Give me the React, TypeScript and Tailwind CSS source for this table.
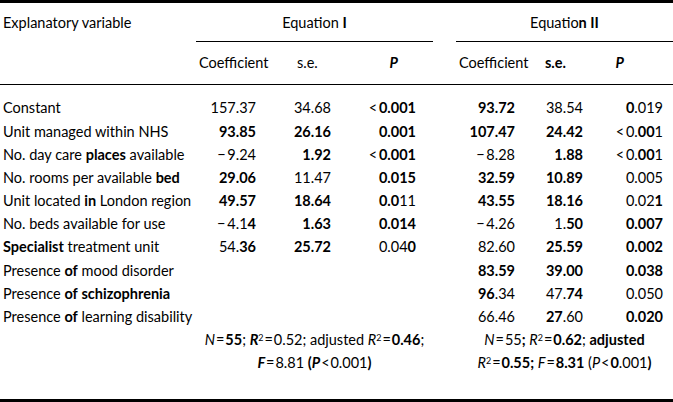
import React from "react";

type Seg = string | { b?: boolean; i?: boolean; sup?: boolean; t: string };

function R({ segs }: { segs: Seg[] }) {
  return (
    <span>
      {segs.map((s, k) => {
        if (typeof s === "string") return <React.Fragment key={k}>{s}</React.Fragment>;
        const cls = [s.b ? "font-bold" : "", s.i ? "italic" : ""].join(" ");
        if (s.sup)
          return (
            <sup key={k} className={"text-[9px] " + cls}>
              {s.t}
            </sup>
          );
        return (
          <span key={k} className={cls}>
            {s.t}
          </span>
        );
      })}
    </span>
  );
}

const B = (t: string): Seg => ({ b: true, t });
const LT = "<\u2009";
const EQ = "\u200A=\u200A";

const rows: { label: Seg[]; v: Seg[][] }[] = [
  { label: ["Constant"], v: [["157.37"], ["34.68"], [LT, B("0.001")], [B("93.72")], ["38.54"], [B("0"), ".019"]] },
  { label: ["Unit managed within NHS"], v: [[B("93.85")], [B("26.16")], [B("0.001")], [B("107.47")], [B("24.42")], [LT + "0.", B("00"), "1"]] },
  { label: ["No. day care ", B("places"), " available"], v: [["−\u20099.24"], [B("1.92")], [LT, B("0.001")], ["−\u20098.28"], [B("1.88")], [LT + "0.", B("00"), "1"]] },
  { label: ["No. rooms per available ", B("bed")], v: [[B("29.06")], ["11.47"], [B("0.015")], [B("32.59")], [B("10.89")], ["0.005"]] },
  { label: ["Unit located ", B("in"), " London region"], v: [[B("49.57")], [B("18.64")], [B("0.0"), "11"], [B("43.55")], [B("18.16")], ["0.02", B("1")]] },
  { label: ["No. beds available for use"], v: [["−\u20094.1", B("4")], [B("1.63")], [B("0.014")], ["−\u20094.26"], ["1.", B("50")], [B("0.007")]] },
  { label: [B("Specialist"), " treatment unit"], v: [["54.", B("36")], [B("25.72")], ["0.04", B("0")], ["82.60"], [B("25.59")], [B("0.002")]] },
  { label: ["Presence ", B("of"), " mood disorder"], v: [[], [], [], [B("83.59")], [B("39.00")], [B("0.038")]] },
  { label: ["Presence ", B("of"), " ", B("schizophrenia")], v: [[], [], [], [B("96"), ".34"], ["47.", B("74")], ["0.050"]] },
  { label: ["Presence ", B("of"), " learning disability"], v: [[], [], [], ["66.46"], [B("27"), ".60"], [B("0.020")]] },
];

const numPad = ["pr-[22px]", "pr-[19px]", "pr-[17px]", "pr-[10px]", "pr-[14px]", "pr-[10px]"];

export default function App() {
  return (
    <div
      className="w-[673px] h-[402px] bg-white text-black overflow-hidden flex flex-col text-[14.5px] leading-none"
      style={{ fontFamily: "Lato, 'Open Sans', sans-serif" }}
    >
      <div className="h-[3px] bg-black shrink-0" />
      <div className="grid grid-cols-[196px_82px_72px_83px_23px_69px_72px_76px]">
        {/* header row 1 */}
        <div className="h-[39px] flex items-center pl-[3px] pt-[2px] whitespace-nowrap">Explanatory variable</div>
        <div className="col-span-3 h-[39px] flex items-center justify-center pt-[2px] border-b border-black">
          <span>
            Equation <span className="font-bold">I</span>
          </span>
        </div>
        <div />
        <div className="col-span-3 h-[39px] flex items-center justify-center pt-[2px] border-b border-black">
          <span>
            Equatio<span className="font-bold">n II</span>
          </span>
        </div>
        {/* header row 2 */}
        <div className="col-span-8 grid grid-cols-[196px_82px_72px_83px_23px_69px_72px_76px] h-[43px] border-b border-black items-center">
          <div />
          <div className="pl-[3px]">Coefficient</div>
          <div className="pl-[19px]">s.e.</div>
          <div className="text-right pr-[35px] font-bold italic">P</div>
          <div />
          <div className="pl-[3px]">Coefficient</div>
          <div className="pl-[20px] font-bold">s.e.</div>
          <div className="text-right pr-[49px] font-bold italic">P</div>
        </div>
      </div>
      <div className="pt-[12px] flex flex-col">
        {rows.map((r, i) => (
          <div
            key={i}
            className="grid grid-cols-[196px_82px_72px_83px_23px_69px_72px_76px] h-[23.2px] items-center"
          >
            <div className="pl-[3px] whitespace-nowrap">
              <R segs={r.label} />
            </div>
            {r.v.slice(0, 3).map((v, j) => (
              <div key={j} className={"text-right whitespace-nowrap " + numPad[j]}>
                <R segs={v} />
              </div>
            ))}
            <div />
            {r.v.slice(3).map((v, j) => (
              <div key={j} className={"text-right whitespace-nowrap " + numPad[j + 3]}>
                <R segs={v} />
              </div>
            ))}
          </div>
        ))}
        <div className="grid grid-cols-[196px_237px_23px_217px]">
          <div />
          <div className="flex flex-col items-center">
            <div className="h-[23.2px] flex items-center whitespace-nowrap">
              <R
                segs={[
                  { i: true, t: "N" },
                  EQ,
                  B("55"),
                  "; ",
                  { i: true, b: true, t: "R" },
                  { sup: true, t: "2" },
                  EQ + "0.52; adjusted ",
                  { i: true, t: "R" },
                  { sup: true, t: "2" },
                  EQ,
                  B("0.46"),
                  ";",
                ]}
              />
            </div>
            <div className="h-[23.2px] flex items-center whitespace-nowrap">
              <R
                segs={[
                  { i: true, b: true, t: "F" },
                  EQ + "8.81 ",
                  B("("),
                  { i: true, b: true, t: "P" },
                  "\u200A<\u200A0.001",
                  B(")"),
                ]}
              />
            </div>
          </div>
          <div />
          <div className="flex flex-col items-center">
            <div className="h-[23.2px] flex items-center whitespace-nowrap">
              <R
                segs={[
                  { i: true, t: "N" },
                  EQ + "55",
                  B(";"),
                  " ",
                  { i: true, t: "R" },
                  { sup: true, t: "2" },
                  EQ,
                  B("0.62"),
                  "; ",
                  B("adjusted"),
                ]}
              />
            </div>
            <div className="h-[23.2px] flex items-center whitespace-nowrap">
              <R
                segs={[
                  { i: true, t: "R" },
                  { sup: true, t: "2" },
                  EQ,
                  B("0.55;"),
                  " ",
                  { i: true, t: "F" },
                  EQ,
                  B("8.31"),
                  " (",
                  { i: true, t: "P" },
                  "\u200A<\u200A",
                  B("0"),
                  ".001",
                  B(")"),
                ]}
              />
            </div>
          </div>
        </div>
      </div>
      <div className="flex-1" />
      <div className="h-[3px] bg-black shrink-0" />
    </div>
  );
}
